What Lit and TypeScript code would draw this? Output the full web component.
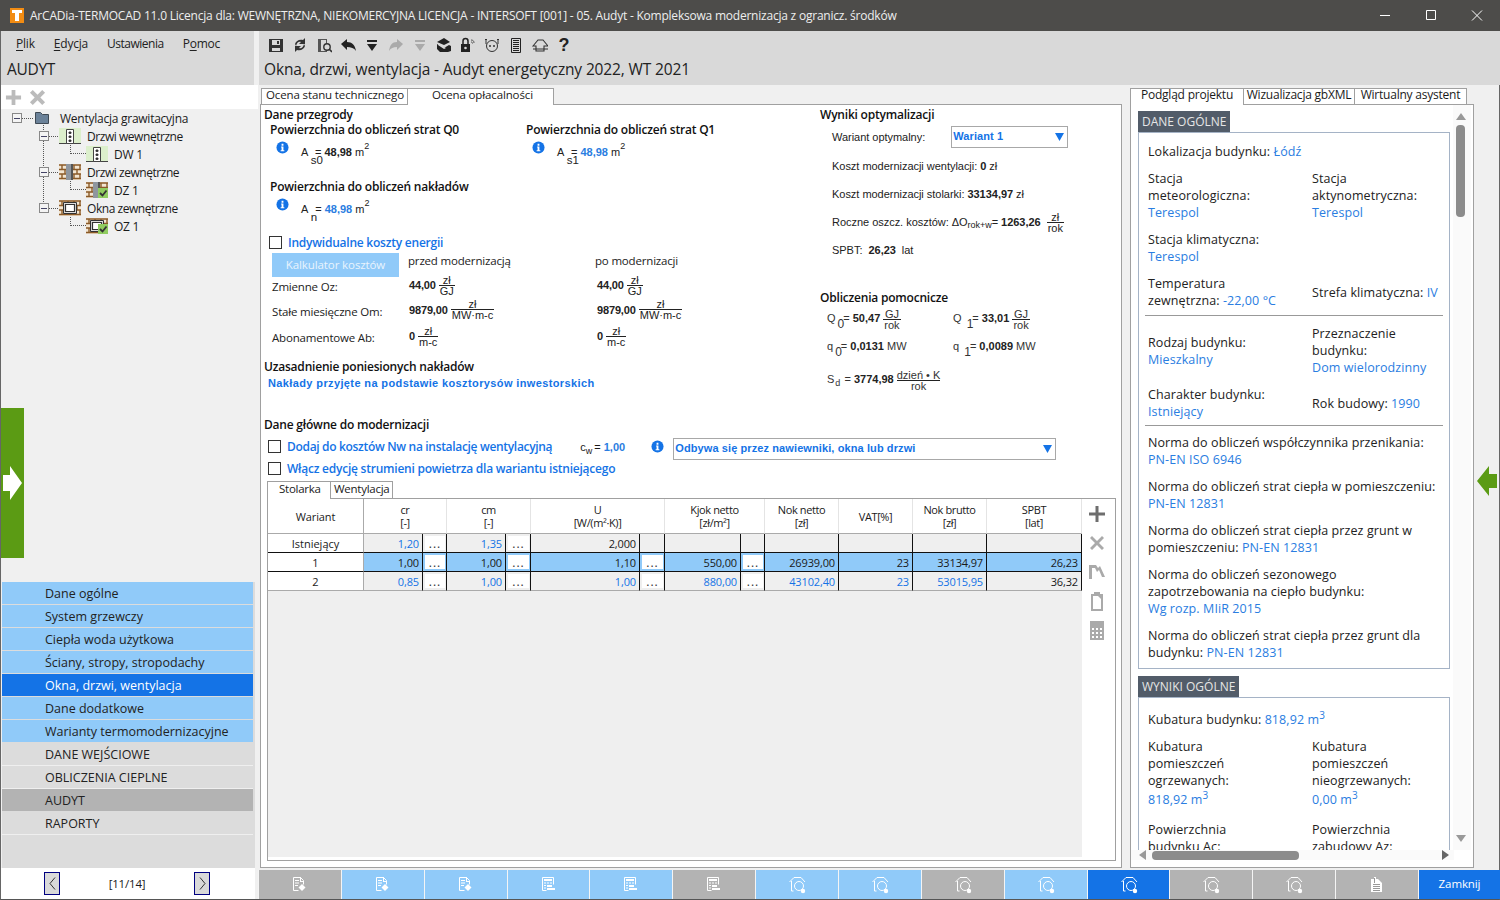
import { LitElement, html, css, svg } from "lit";
import { customElement } from "lit/decorators.js";

const toolIcons = [
  svg`<path fill="#333" d="M1 2h14v13H1z"/><path fill="#d9d9d9" d="M4 3h8v5H4zM4 11h8v3H4z"/><path fill="#333" d="M9 4h2v3H9z"/>`,
  svg`<path fill="#333" d="M3 7c1-3 4-5 8-4l2-2v6H7l2-2C7 4 5 5 4 9zM13 9c-1 3-4 5-8 4l-2 2V9h6l-2 2c2 1 4 0 5-4z"/>`,
  svg`<path fill="#555" d="M2 2h9v13H2z"/><path fill="#d9d9d9" d="M5 3h5v11H5z"/><circle cx="11" cy="10" r="3.2" fill="#d9d9d9" stroke="#333" stroke-width="1.4"/><path stroke="#333" stroke-width="1.6" d="M13 12l3 3"/>`,
  svg`<path fill="#222" d="M1 7l6-5v3c5 0 8 3 9 9-2-3-5-4-9-4v3z"/>`,
  svg`<path fill="#222" d="M3 3h10v2H3zM3 7h10l-5 7z"/>`,
  svg`<path fill="#aaa" d="M15 7L9 2v3c-5 0-7 3-8 9 2-3 4-4 8-4v3z"/>`,
  svg`<path fill="#aaa" d="M3 3h10v2H3zM3 7h10l-5 7z"/>`,
  svg`<path fill="#222" d="M1 5l7-4 6 4-6 3zM1 7l7 4 5-3 2 1v5l-3 1H4l-3-3z"/><path fill="#d9d9d9" d="M2 8l6 4 2-1-8-4z"/>`,
  svg`<path fill="#222" d="M1 7h9v8H1z"/><path fill="none" stroke="#222" stroke-width="1.5" d="M3 7V4a2.500 2.500 0 015 0v3"/><circle cx="5.500" cy="11" r="1.300" fill="#d9d9d9"/><path fill="none" stroke="#555" d="M11 3c2 0 3 1 3 3M11 5c1 0 1.500.5 1.500 1.500"/>`,
  svg`<circle cx="8" cy="9" r="5.500" fill="none" stroke="#333"/><circle cx="6" cy="9" r="1" fill="#333"/><circle cx="10" cy="9" r="1" fill="#333"/><path fill="none" stroke="#333" d="M2 7V2M1 3l1-1 1 1M14 7V2M13 3l1-1 1 1"/>`,
  svg`<path fill="none" stroke="#222" d="M3.500 1.500h9v14h-9z"/><path stroke="#222" d="M5 3.500h6M5 5.500h6M5 7.500h6M5 9.500h6M5 11.500h6M5 13.500h6"/>`,
  svg`<path fill="none" stroke="#333" stroke-width="1.100" d="M1 9l5-6h5l5 6H12v5H4V9z"/><path stroke="#333" d="M1 12h15"/>`,
];

const docIcon = svg`<path fill="none" stroke="#fff" d="M2.500 1.500h7l3 3v4M2.500 1.500v13h5"/><path fill="#fff" d="M9 1h1v4h3v1H9zM4 4h4v1H4zM4 6.500h4v1H4zM4 9h3v1H4z"/><path fill="#fff" d="M11 8l3.500 3.500-3.500 3.500-3.500-3.500z"/>`;
const calcIcon = svg`<path fill="none" stroke="#fff" d="M2.500 1.500h11v7M2.500 1.500v13h4"/><path fill="#fff" d="M4 3h8v2H4zM4 6.500h2v1H4zM7 6.500h2v1H7zM10 6.500h2v1h-2zM4 9h2v1H4zM4 11.500h2v1H4zM7 9h5v2H7zM7 12h8v2H7z"/>`;
const houseIcon = svg`<path fill="none" stroke="#fff" d="M1.500 6L6 1.500h7L17 6M3.500 5v10h2"/><circle cx="11" cy="10" r="4.500" fill="none" stroke="#fff"/><circle cx="15" cy="15" r="2.200" fill="#fff"/>`;
const paperIcon = svg`<path fill="#fff" d="M3 3h3V1h2v2h2l4 4v9H3z"/><path fill="none" stroke="#999" d="M5 8.500h7M5 10.500h7M5 12.500h7M5 14.500h7M6.500 2v5"/>`;

const bricks = svg`<rect width="22" height="16" fill="#f3e6d2"/><path fill="none" stroke="#8a5a28" stroke-width="1.400" d="M0 1h22M0 5.500h22M0 10h22M0 14.500h22M3 1v4.500M9 1v4.500M15 1v4.500M21 1v4.500M6 5.500V10M12 5.500V10M18 5.500V10M3 10v4.500M9 10v4.500M15 10v4.500M21 10v4.500"/>`;
const treeIcons: Record<string, any> = {
  folder: svg`<path fill="#6b8299" stroke="#3f4a55" d="M1.500 12.500V1.500h5l2 2h6v9z"/>`,
  inner: svg`<rect width="22" height="15" fill="#dcefcc"/><path stroke="#444" d="M0 15.500h22"/><path fill="#fff" stroke="#444" d="M7.500 1.500h7v14h-7z"/><path stroke="#444" d="M10 4h2v1.500h-2zM10 8h2v1.500h-2zM10 12h2v1.500h-2z"/>`,
  outer: svg`${bricks}<rect x="7" width="7" height="16" fill="#8f969e"/><path fill="#555" d="M12 0h2v16h-2z"/>`,
  win: svg`${bricks}<rect x="4" y="2" width="14" height="11" fill="#ddd"/><path fill="#fff" stroke="#333" stroke-width="1.200" d="M6.500 4.500h9v7h-9z"/><path fill="none" stroke="#333" d="M4.500 2.500h13v11h-13z"/>`,
};
const check = svg`<rect x="12" y="6" width="10" height="10" fill="#90cc60"/><path fill="none" stroke="#333" stroke-width="1.800" d="M14 11l2.500 2.500 4-5"/>`;

const info = html`<svg class="info" viewBox="0 0 14 14"><circle cx="7" cy="7" r="6.500" fill="#1473e6"/><path fill="#fff" d="M6 3h2v2H6zM5.500 6H8v4h1v1H5v-1h1V7h-.5z"/></svg>`;

const frac = (a: string, b: string) => html`<span class="frac"><span>${a}</span><span class="den">${b}</span></span>`;

@customElement("app-root")
export class AppRoot extends LitElement {
  static styles = css`
    :host { display: block; width: 1500px; height: 900px; overflow: hidden; background: #f0f0f0; font-family: "Open Sans","Noto Sans","Liberation Sans",sans-serif; font-size: 12px; color: #1a1a1a; }
    * { box-sizing: border-box; }
    svg { display: block; flex: none; }
    .win { width: 1500px; height: 900px; display: grid; grid-template-rows: 31px 1fr; border-left: 1px solid #666; border-right: 1px solid #666; border-bottom: 1px solid #555; }
    .title { background: #4d4c4a; margin: 0 -1px; display: flex; align-items: center; color: #eee; padding-left: 10px; font-size: 12px; letter-spacing: -.22px; }
    .logo { width: 14px; height: 15px; margin-right: 6px; }
    .winbtns { margin-left: auto; display: flex; }
    .winbtns svg { width: 46px; height: 31px; }
    .body { display: grid; grid-template-columns: 257px 1fr; min-height: 0; }
    .left { display: flex; flex-direction: column; min-height: 0; }
    .lhead { width: 253px; height: 54px; background: #d9d9d9; }
    .menu { display: flex; height: 24px; align-items: center; padding-left: 15px; font-size: 12px; letter-spacing: -.2px; color: #222; }
    .menu span { margin-right: 19px; }
    .menu span:nth-child(3) { letter-spacing: -.5px; }
    .menu u { text-underline-offset: 2px; }
    .audyt { font-size: 15.5px; padding-left: 6px; line-height: 29px; letter-spacing: -.3px; color: #222; }
    .strip { height: 24px; background: #fff; display: flex; align-items: center; padding-left: 4px; gap: 7px; }
    .strip svg { width: 17px; height: 17px; }
    .treewrap { height: 473px; position: relative; }
    .tree { position: relative; }
    .tree::before { content: ""; position: absolute; left: 42px; top: 16px; height: 83px; border-left: 1px dotted #555; }
    .tr { height: 18px; display: flex; align-items: center; position: relative; }
    .tr .lbl { font-size: 12px; letter-spacing: -.25px; }
    .l1 .lbl { letter-spacing: -.45px; }
    .l0 { padding-left: 11px; } .l1 { padding-left: 38px; } .l2 { padding-left: 69px; }
    .exp { width: 10px; height: 10px; border: 1px solid #888; background: #f4f4f4; display: flex; align-items: center; justify-content: center; flex: none; position: relative; }
    .exp::before { content: ""; width: 6px; border-top: 1px solid #446; }
    .dots { border-top: 1px dotted #555; width: 9px; flex: none; margin-right: 1px; }
    .l0 .dots { width: 11px; }
    .corner { width: 16px; height: 9px; border-left: 1px dotted #555; border-bottom: 1px dotted #555; align-self: flex-start; flex: none; }
    .tr svg { width: 22px; height: 16px; margin-right: 6px; }
    .l0 svg { width: 16px; height: 14px; margin-right: 10px; }
    .green { position: absolute; left: 0; top: 299px; width: 23px; height: 150px; background: #5b9b14; display: flex; align-items: center; justify-content: center; }
    .green svg { width: 20px; height: 34px; }
    .nav { flex: 1; background: #dcdcdc; width: 253px; margin-left: 1px; }
    .nav div { height: 22px; margin: 0 0 1px 0; padding: 1px 0 0 43px; line-height: 22px; background: #90caf9; font-size: 12.500px; letter-spacing: 0; color: #222; width: 251px; }
    .nav .act { background: #1473e6; color: #fff; }
    .nav .g { background: #dcdcdc; box-shadow: 0 1px 0 #efefef; }
    .nav .d { background: #b3b3b3; }
    .pager { height: 31px; background: #fff; width: 254px; display: flex; align-items: center; padding-left: 43px; }
    .pbtn { width: 16px; height: 23px; border: 1px solid #000080; background: #d9d9d9; display: flex; align-items: center; justify-content: center; }
    .pbtn svg { width: 7px; height: 13px; }
    .pg { width: 134px; text-align: center; font-size: 11.500px; letter-spacing: -.2px; }
    .main { display: flex; flex-direction: column; min-height: 0; }
    .mhead { height: 54px; background: #d9d9d9; margin-left: 1px; margin-right: -1px; }
    .tools { height: 28px; display: flex; align-items: center; padding-left: 5px; }
    .tools i { width: 24px; display: flex; justify-content: center; }
    .tools svg { width: 16px; height: 16px; }
    .q { font-family: "Liberation Sans", sans-serif; font-weight: 700; font-size: 18px; width: 24px; text-align: center; color: #222; }
    .mtitle { font-size: 15.500px; letter-spacing: -.14px; padding-left: 5px; line-height: 21px; color: #222; }
    .panes { height: 785px; display: flex; padding: 0 0 2px 2px; }
    .pane1 { width: 862px; display: flex; flex-direction: column; padding-top: 3px; }
    .tabs { display: flex; height: 16px; padding-left: 1px; position: relative; z-index: 1; }
    .tab { border: 1px solid #a0a0a0; border-bottom: 0; font-size: 11.500px; line-height: 12px; padding: 0 0 0 4px; background: #fff; letter-spacing: -.13px; height: 16px; }
    .tab.on { height: 17px; }
    .t1 { width: 147px; } .t2 { width: 147px; padding-left: 24px; margin-left: -1px; }
    .box { flex: 1; border: 1px solid #a0a0a0; background: #fff; padding: 0 6px 0 3px; display: flex; flex-direction: column; }
    .topg { display: grid; grid-template-columns: 556px 1fr; height: 313px; }
    .ttl { font-weight: 600; font-size: 12px; line-height: 14px; height: 14px; letter-spacing: -.21px; color: #111; white-space: nowrap; }
    .ttl.first { margin-top: 3px; }
    .two { display: grid; grid-template-columns: 256px 1fr; padding-left: 6px; margin-top: 1px; }
    .two.sp { margin-top: 14px; }
    .val { display: flex; align-items: flex-start; height: 28px; padding-left: 6px; }
    .info { width: 13px; height: 13px; margin-top: 3px; }
    .qty { margin: 7px 0 0 12px; font: 11px/15px "Liberation Sans", sans-serif; white-space: nowrap; color: #222; }
    .qty b { color: #222; }
    .blue, .qty b.blue { color: #2a7de1; }
    sub, sup { line-height: 0; vertical-align: baseline; position: relative; }
    sub { top: 5px; font-size: 11px; }
    sup { top: -5px; font-size: 9px; }
    .qty sub { top: 8px; font-size: 11.500px; }
    .qty sup { top: -7px; }
    .qty sub.ov2 { margin-right: -8px; }
    .qty sub.ov1 { margin-right: -2px; }
    .ch { display: flex; align-items: center; height: 18px; font-size: 12px; font-weight: 600; color: #1473e6; letter-spacing: -.23px; white-space: nowrap; }
    .cb { width: 13px; height: 13px; border: 1px solid #333; background: #fff; flex: none; margin-right: 6px; }
    .ch.a { margin: 10px 0 2px 5px; }
    .cost { display: grid; grid-template-columns: 136px 187px 1fr; grid-template-rows: 22px 23px 26px 27px; margin-left: 8px; align-items: center; font-size: 11.500px; letter-spacing: -.18px; color: #222; }
    .cost .hd { align-self: start; line-height: 16px; }
    .calc { background: #90caf9; height: 24px; width: 127px; text-align: center; line-height: 24px; align-self: start; color: #e9f4fd; letter-spacing: -.1px; }
    .num { font: 700 11px/14px "Liberation Sans", sans-serif; display: flex; align-items: center; letter-spacing: -.15px; padding-bottom: 3px; margin-left: 1px; color: #222; }
    .num.po { margin-left: 2px; }
    .frac { display: inline-flex; flex-direction: column; align-items: stretch; text-align: center; font: 400 11px/10px "Liberation Sans", sans-serif; margin-left: 3px; vertical-align: middle; letter-spacing: 0; }
    .frac .den { border-top: 1px solid #222; line-height: 10px; padding: 0 1px; }
    .uz { margin-top: 9px; }
    .nak { font: 700 11px/14px "Liberation Sans", sans-serif; color: #1473e6; padding-left: 4px; margin-top: 2px; letter-spacing: .38px; white-space: nowrap; }
    .lab { font: 11px/14px "Liberation Sans", sans-serif; padding-left: 12px; color: #222; display: flex; align-items: center; white-space: nowrap; letter-spacing: -.03px; }
    .lab b { margin: 0 3px; }
    .lab sub { font-size: 9px; top: 3px; }
    .r0 { height: 22px; margin: 4px 0 4px; }
    .r1 { height: 28px; }
    .sel { border: 1px solid #a8a8a8; height: 22px; display: flex; align-items: center; font: 700 11px "Liberation Sans", sans-serif; color: #1473e6; padding: 0 3px 0 1px; justify-content: space-between; }
    .sel span { padding-bottom: 2px; }
    .sel svg { width: 9px; height: 8px; }
    .sel1 { width: 117px; margin-left: 26px; }
    .sel1 span { letter-spacing: .1px; }
    .obl { margin-top: 27px; }
    .qg { display: grid; grid-template-columns: 126px 1fr; padding-left: 7px; margin-top: 3px; }
    .qg > div { font: 11px/14px "Liberation Sans", sans-serif; white-space: nowrap; height: 27px; color: #333; padding-top: 4px; }
    .qg > .fq { padding-top: 1px; }
    .qg b { color: #222; }
    .qg .frac { margin-left: 0; }
    .qg sub { font-size: 12px; top: 6px; margin: 0 -1px 0 2px; }
    .qg .sd { grid-column: span 2; padding-top: 8px; }
    .qg .sd sub { font-size: 9px; top: 3px; margin: 0 1px; }
    .row1 { display: flex; height: 22px; margin: 6px 0 0 4px; align-items: center; }
    .row1 .ch { height: 18px; margin-top: -6px; letter-spacing: -.32px; }
    .cw { font: 11px "Liberation Sans", sans-serif; margin: -4px 0 0 28px; width: 71px; white-space: nowrap; }
    .cw sub { font-size: 9px; top: 3px; margin-right: 2px; }
    .cw .blue { font-weight: 700; }
    .row1 .info { margin: -5px 9px 0 0; }
    .sel2 { width: 383px; letter-spacing: .1px; }
    .row2 { margin: -1px 0 0 4px; }
    .stabs { display: flex; height: 17px; margin: 4px 0 0 3px; position: relative; z-index: 1; font-size: 11.500px; letter-spacing: -.26px; }
    .stabs span { border: 1px solid #a0a0a0; border-bottom: 0; height: 17px; line-height: 14px; background: #fff; }
    .stabs .s1 { width: 64px; padding-left: 11px; height: 18px; }
    .stabs .s2 { width: 63px; padding-left: 3px; margin-left: -1px; }
    .gbox { margin-left: 3px; width: 849px; height: 363px; border: 1px solid #a0a0a0; display: flex; }
    .gridw { width: 814px; height: 358px; background: #efefef; }
    .grid { display: grid; grid-template-columns: 96px 59px 24px 59px 25px 109px 25px 76px 24px 74px 74px 74px 95px; grid-template-rows: 35px 19px 19px 19px; font-size: 11px; letter-spacing: -.38px; }
    .grid > div { display: flex; align-items: center; white-space: nowrap; }
    .h { background: #fff; justify-content: center; text-align: center; border-right: 1px solid #e4e4e4; border-bottom: 1px solid #aaa; line-height: 13px; }
    .h.w { border-right-color: #aaa; letter-spacing: -.1px; }
    .s2c { grid-column: span 2; }
    .rn { background: #fff; justify-content: center; border-right: 1px solid #aaa; letter-spacing: 0; }
    .c { justify-content: flex-end; padding-right: 3px; border-right: 1px solid #111; letter-spacing: -.13px; }
    .c.b { color: #1473e6; }
    .e { padding: 2px 1px 2px 2px; justify-content: center; border-right: 1px solid #111; }
    .e span { background: #fff; width: 100%; height: 100%; display: flex; align-items: flex-end; justify-content: center; line-height: 10px; letter-spacing: 1px; font-size: 12px; padding-bottom: 1px; color: #333; }
    .rb { border-bottom: 1px solid #111; }
    .rl { border-bottom: 1px solid #aaa; }
    .sel-r { background: #90caf9; }
    .side { flex: 1; display: flex; flex-direction: column; align-items: center; padding: 5px 3px 0 0; gap: 9px; }
    .side svg { width: 20px; height: 20px; }
    .pane2 { width: 344px; margin-left: 8px; display: flex; flex-direction: column; padding-top: 3px; }
    .rtabs { height: 16px; display: flex; position: relative; z-index: 1; font-size: 12px; letter-spacing: -.22px; }
    .rtabs span { border: 1px solid #a0a0a0; border-bottom: 0; height: 16px; line-height: 12px; background: #fff; text-align: center; white-space: nowrap; }
    .rtabs .a { width: 114px; height: 17px; }
    .rtabs .b2 { width: 112px; margin-left: -1px; }
    .rtabs .c2 { width: 113px; margin-left: -1px; }
    .rbox { flex: 1; border: 1px solid #a0a0a0; background: #fff; display: grid; grid-template-columns: 322px 18px; grid-template-rows: 745px 10px; min-height: 0; overflow: hidden; }
    .scroll { overflow: hidden; padding: 6px 0 0 7px; }
    .sect { display: inline-block; background: #525c69; color: #e6e6e6; font-size: 12px; line-height: 21px; height: 21px; padding: 0 4px; vertical-align: top; letter-spacing: 0; }
    .sb { width: 312px; border: 1px solid #a5b3c6; margin-bottom: 7px; padding: 10px 6px 7px 9px; font-size: 12.500px; line-height: 17px; color: #222; letter-spacing: .09px; white-space: nowrap; }
    .sb .v { color: #2a7de1; }
    .it { margin-bottom: 10px; }
    .it:last-child { margin-bottom: 0; }
    .pr { display: grid; grid-template-columns: 164px 1fr; align-items: center; margin-bottom: 10px; }
    .pr.big { margin-bottom: 13px; }
    .sb .lst { display: block; margin-top: 2px; }
    .ln { border-top: 1px solid #999; margin: -4px 1px 9px -3px; width: 298px; }
    .ln.b2 { margin-top: -5px; margin-bottom: 8px; }
    .sb2 { padding-top: 13px; height: 240px; }
    .sb sup { top: -5px; font-size: 10px; }
    .vs { display: flex; flex-direction: column; align-items: flex-start; padding-left: 3px; background: #fafafa; }
    .vs svg { width: 10px; height: 7px; margin: 8px 0 0 0; }
    .vth { width: 9px; height: 92px; background: #8c8c8c; border-radius: 4px; margin-top: 5px; }
    .vs .dn { margin-top: auto; margin-bottom: 8px; }
    .hs { grid-column: span 2; display: flex; align-items: center; padding-left: 8px; background: #fafafa; margin-right: 17px; }
    .hs svg { width: 7px; height: 10px; flex: none; }
    .hth { width: 147px; height: 9px; background: #8c8c8c; border-radius: 4px; margin-left: 6px; }
    .hs .rt { margin-left: auto; margin-right: 5px; }
    .arrow { flex: 1; display: flex; align-items: center; justify-content: center; padding: 0 0 0 1px; }
    .arrow svg { width: 20px; height: 30px; margin-top: 9px; }
    .bar { height: 29px; display: flex; padding-left: 1px; margin-right: -1px; background: #f4f4f4; gap: 1px; }
    .bb { flex: 1; background: #b3b3b3; display: flex; align-items: center; justify-content: center; }
    .bb.l { background: #90caf9; }
    .bb.a { background: #1473e6; }
    .bb svg { width: 18px; height: 18px; }
    .cl { flex: none; width: 81px; background: #1473e6; color: #fff; text-align: center; line-height: 27px; font-size: 11.500px; letter-spacing: -.1px; }
  `;

  tree() {
    const n = (cls: string, pre: any, ic: string, lbl: string, chk = false) => html`<div class="tr ${cls}">${pre}<svg viewBox="${ic === "folder" ? "0 0 16 14" : "0 0 22 16"}">${treeIcons[ic]}${chk ? check : ""}</svg><span class="lbl">${lbl}</span></div>`;
    const ex = html`<span class="exp"></span><span class="dots"></span>`;
    const co = html`<span class="corner"></span>`;
    return html`<div class="tree">
      ${n("l0", ex, "folder", "Wentylacja grawitacyjna")}
      ${n("l1", ex, "inner", "Drzwi wewnętrzne")}
      ${n("l2", co, "inner", "DW 1")}
      ${n("l1", ex, "outer", "Drzwi zewnętrzne")}
      ${n("l2", co, "outer", "DZ 1", true)}
      ${n("l1", ex, "win", "Okna zewnętrzne")}
      ${n("l2", co, "win", "OZ 1", true)}
    </div>`;
  }

  grid() {
    const hdr = [["Wariant", "", "w"], ["cr", "[-]", "s"], ["cm", "[-]", "s"], ["U", "[W/(m²·K)]", "s"], ["Kjok netto", "[zł/m²]", "s"], ["Nok netto", "[zł]", ""], ["VAT[%]", "", ""], ["Nok brutto", "[zł]", ""], ["SPBT", "[lat]", ""]];
    const rows = [
      { n: "Istniejący", cr: "1,20", cm: "1,35", u: "2,000", k: "", nn: "", v: "", nb: "", sp: "", cls: "rb", blue: true, ub: false, sel: false },
      { n: "1", cr: "1,00", cm: "1,00", u: "1,10", k: "550,00", nn: "26939,00", v: "23", nb: "33134,97", sp: "26,23", cls: "rb", blue: false, ub: false, sel: true },
      { n: "2", cr: "0,85", cm: "1,00", u: "1,00", k: "880,00", nn: "43102,40", v: "23", nb: "53015,95", sp: "36,32", cls: "rl", blue: true, ub: true, sel: false },
    ];
    return html`<div class="grid">
      ${hdr.map((h) => html`<div class="h ${h[2] === "w" ? "w" : ""} ${h[2] === "s" ? "s2c" : ""}"><span>${h[0]}${h[1] ? html`<br />${h[1]}` : ""}</span></div>`)}
      ${rows.map((r) => {
        const bg = `${r.cls} ${r.sel ? "sel-r" : ""}`;
        const c = (t: string, blue = r.blue) => html`<div class="c ${blue ? "b" : ""} ${bg}">${t}</div>`;
        const e = (show = true) => html`<div class="e ${bg}">${show ? html`<span>...</span>` : ""}</div>`;
        return html`<div class="rn ${r.cls}">${r.n}</div>
          ${c(r.cr)}${e()}${c(r.cm)}${e()}${c(r.u, r.ub)}${e(r.n !== "Istniejący")}${c(r.k)}${e(r.n !== "Istniejący")}${c(r.nn)}${c(r.v)}${c(r.nb)}${c(r.sp, false)}`;
      })}
    </div>`;
  }

  render() {
    const nav = [["Dane ogólne", ""], ["System grzewczy", ""], ["Ciepła woda użytkowa", ""], ["Ściany, stropy, stropodachy", ""], ["Okna, drzwi, wentylacja", "act"], ["Dane dodatkowe", ""], ["Warianty termomodernizacyjne", ""], ["DANE WEJŚCIOWE", "g"], ["OBLICZENIA CIEPLNE", "g"], ["AUDYT", "d"], ["RAPORTY", "g"]];
    const bar: [any, string][] = [[docIcon, ""], [docIcon, "l"], [docIcon, "l"], [calcIcon, "l"], [calcIcon, "l"], [calcIcon, ""], [houseIcon, "l"], [houseIcon, "l"], [houseIcon, ""], [houseIcon, "l"], [houseIcon, "a"], [houseIcon, ""], [houseIcon, ""], [paperIcon, ""]];
    return html`<div class="win">
      <div class="title">
        <svg class="logo" viewBox="0 0 14 15"><rect width="14" height="15" fill="#f28c13"/><path fill="#fff" d="M2 2h10v3H9v8H5V5H2z"/></svg>
        <span>ArCADia-TERMOCAD 11.0 Licencja dla: WEWNĘTRZNA, NIEKOMERCYJNA LICENCJA - INTERSOFT [001] - 05. Audyt - Kompleksowa modernizacja z ogranicz. środków</span>
        <div class="winbtns">
          <svg viewBox="0 0 46 31"><path stroke="#fff" d="M18 15.500h10"/></svg>
          <svg viewBox="0 0 46 31"><path fill="none" stroke="#fff" d="M18.500 10.500h9v9h-9z"/></svg>
          <svg viewBox="0 0 46 31"><path stroke="#fff" d="M18 10.500l10 10M28 10.500l-10 10"/></svg>
        </div>
      </div>
      <div class="body">
        <div class="left">
          <div class="lhead">
            <div class="menu"><span><u>P</u>lik</span><span><u>E</u>dycja</span><span>Ustawienia</span><span>P<u>o</u>moc</span></div>
            <div class="audyt">AUDYT</div>
          </div>
          <div class="strip">
            <svg viewBox="0 0 18 18"><path fill="#bbb" d="M7 1h4v6h6v4h-6v6H7v-6H1V7h6z"/></svg>
            <svg viewBox="0 0 18 18"><path fill="#bbb" d="M4 1l5 5 5-5 3 3-5 5 5 5-3 3-5-5-5 5-3-3 5-5-5-5z"/></svg>
          </div>
          <div class="treewrap">
            ${this.tree()}
            <div class="green"><svg viewBox="0 0 20 34"><path fill="#fff" d="M0 9h7V0l12 17L7 34v-9H0z"/></svg></div>
          </div>
          <div class="nav">${nav.map((n) => html`<div class="${n[1]}">${n[0]}</div>`)}</div>
          <div class="pager">
            <div class="pbtn"><svg viewBox="0 0 7 13"><path fill="none" stroke="#333" d="M6 .5L1 6.500l5 6"/></svg></div>
            <div class="pg">[11/14]</div>
            <div class="pbtn"><svg viewBox="0 0 7 13"><path fill="none" stroke="#333" d="M1 .5l5 6-5 6"/></svg></div>
          </div>
        </div>
        <div class="main">
          <div class="mhead">
            <div class="tools">${toolIcons.map((i) => html`<i><svg viewBox="0 0 16 16">${i}</svg></i>`)}<span class="q">?</span></div>
            <div class="mtitle">Okna, drzwi, wentylacja - Audyt energetyczny 2022, WT 2021</div>
          </div>
          <div class="panes">
            <div class="pane1">
              <div class="tabs"><div class="tab t1">Ocena stanu technicznego</div><div class="tab on t2">Ocena opłacalności</div></div>
              <div class="box">
                <div class="topg">
                  <div>
                    <div class="ttl first">Dane przegrody</div>
                    <div class="two">
                      <div class="ttl">Powierzchnia do obliczeń strat Q0</div>
                      <div class="ttl">Powierzchnia do obliczeń strat Q1</div>
                    </div>
                    <div class="two">
                      <div class="val">${info}<span class="qty">A <sub class="ov2">s0</sub>= <b>48,98</b> m<sup>2</sup></span></div>
                      <div class="val">${info}<span class="qty">A <sub class="ov2">s1</sub>= <b class="blue">48,98</b> m<sup>2</sup></span></div>
                    </div>
                    <div class="two sp"><div class="ttl">Powierzchnia do obliczeń nakładów</div></div>
                    <div class="two"><div class="val">${info}<span class="qty">A <sub class="ov1">n</sub>= <b class="blue">48,98</b> m<sup>2</sup></span></div></div>
                    <div class="ch a"><span class="cb"></span>Indywidualne koszty energii</div>
                    <div class="cost">
                      <div class="calc">Kalkulator kosztów</div><div class="hd">przed modernizacją</div><div class="hd">po modernizacji</div>
                      <div>Zmienne Oz:</div><div class="num">44,00 ${frac("zł", "GJ")}</div><div class="num po">44,00 ${frac("zł", "GJ")}</div>
                      <div>Stałe miesięczne Om:</div><div class="num">9879,00 ${frac("zł", "MW·m-c")}</div><div class="num po">9879,00 ${frac("zł", "MW·m-c")}</div>
                      <div>Abonamentowe Ab:</div><div class="num">0 ${frac("zł", "m-c")}</div><div class="num po">0 ${frac("zł", "m-c")}</div>
                    </div>
                    <div class="ttl uz">Uzasadnienie poniesionych nakładów</div>
                    <div class="nak">Nakłady przyjęte na podstawie kosztorysów inwestorskich</div>
                  </div>
                  <div>
                    <div class="ttl first">Wyniki optymalizacji</div>
                    <div class="lab r0">Wariant optymalny:<div class="sel sel1"><span>Wariant 1</span><svg viewBox="0 0 9 8"><path fill="#1473e6" d="M0 0h9L4.500 8z"/></svg></div></div>
                    <div class="lab r1">Koszt modernizacji wentylacji:<b>0</b>zł</div>
                    <div class="lab r1">Koszt modernizacji stolarki:<b>33134,97</b>zł</div>
                    <div class="lab r1">Roczne oszcz. kosztów: ΔO<sub>rok+w</sub>=<b>1263,26</b>${frac("zł", "rok")}</div>
                    <div class="lab r1">SPBT:&nbsp;<b>26,23</b>&nbsp;lat</div>
                    <div class="ttl obl">Obliczenia pomocnicze</div>
                    <div class="qg">
                      <div class="fq">Q<sub>0</sub>= <b>50,47</b> ${frac("GJ", "rok")}</div><div class="fq">Q <sub>1</sub>= <b>33,01</b> ${frac("GJ", "rok")}</div>
                      <div>q<sub>0</sub>= <b>0,0131</b> MW</div><div>q <sub>1</sub>= <b>0,0089</b> MW</div>
                      <div class="sd">S<sub>d</sub> = <b>3774,98</b> ${frac("dzień • K", "rok")}</div>
                    </div>
                  </div>
                </div>
                <div class="ttl">Dane główne do modernizacji</div>
                <div class="row1">
                  <div class="ch"><span class="cb"></span>Dodaj do kosztów Nw na instalację wentylacyjną</div>
                  <span class="cw">c<sub>w</sub>= <span class="blue">1,00</span></span>
                  ${info}
                  <div class="sel sel2"><span>Odbywa się przez nawiewniki, okna lub drzwi</span><svg viewBox="0 0 9 8"><path fill="#1473e6" d="M0 0h9L4.500 8z"/></svg></div>
                </div>
                <div class="ch row2"><span class="cb"></span>Włącz edycję strumieni powietrza dla wariantu istniejącego</div>
                <div class="stabs"><span class="s1">Stolarka</span><span class="s2">Wentylacja</span></div>
                <div class="gbox">
                  <div class="gridw">${this.grid()}</div>
                  <div class="side">
                    <svg viewBox="0 0 20 20"><path fill="#6e6e6e" d="M8.500 2h3v6.500H18v3h-6.500V18h-3v-6.500H2v-3h6.500z"/></svg>
                    <svg viewBox="0 0 20 20"><path fill="#aaa" d="M5 3l5 5 5-5 2 2-5 5 5 5-2 2-5-5-5 5-2-2 5-5-5-5z"/></svg>
                    <svg viewBox="0 0 20 20"><path fill="#aaa" d="M2 3h7l2 3 2-2 5 11h-3l-3-7-2 2-2-4H5v11H2z"/></svg>
                    <svg viewBox="0 0 20 20"><path fill="#aaa" d="M4 3h3V1h6v2h3v17H4z"/><path fill="#fff" d="M6 5h5l3 3v10H6z"/></svg>
                    <svg viewBox="0 0 20 20"><path fill="#aaa" d="M3 1h14v19H3z"/><path fill="#fff" d="M5 8h2v2H5zM9 8h2v2H9zM13 8h2v2h-2zM5 12h2v2H5zM9 12h2v2H9zM13 12h2v2h-2zM5 16h2v2H5zM9 16h2v2H9zM13 16h2v2h-2z"/></svg>
                  </div>
                </div>
              </div>
            </div>
            <div class="pane2">
              <div class="rtabs"><span class="a">Podgląd projektu</span><span class="b2">Wizualizacja gbXML</span><span class="c2">Wirtualny asystent</span></div>
              <div class="rbox">
                <div class="scroll">
                  <span class="sect">DANE OGÓLNE</span>
                  <div class="sb">
                    <div class="it">Lokalizacja budynku: <span class="v">Łódź</span></div>
                    <div class="pr"><div>Stacja<br />meteorologiczna:<br /><span class="v">Terespol</span></div><div>Stacja<br />aktynometryczna:<br /><span class="v">Terespol</span></div></div>
                    <div class="it">Stacja klimatyczna:<br /><span class="v">Terespol</span></div>
                    <div class="pr"><div>Temperatura<br />zewnętrzna: <span class="v">-22,00 °C</span></div><div>Strefa klimatyczna: <span class="v">IV</span></div></div>
                    <div class="ln"></div>
                    <div class="pr"><div>Rodzaj budynku:<br /><span class="v">Mieszkalny</span></div><div>Przeznaczenie<br />budynku:<br /><span class="v">Dom wielorodzinny</span></div></div>
                    <div class="pr"><div>Charakter budynku:<br /><span class="v">Istniejący</span></div><div>Rok budowy: <span class="v">1990</span></div></div>
                    <div class="ln b2"></div>
                    <div class="it">Norma do obliczeń współczynnika przenikania:<br /><span class="v">PN-EN ISO 6946</span></div>
                    <div class="it">Norma do obliczeń strat ciepła w pomieszczeniu:<br /><span class="v">PN-EN 12831</span></div>
                    <div class="it">Norma do obliczeń strat ciepła przez grunt w<br />pomieszczeniu: <span class="v">PN-EN 12831</span></div>
                    <div class="it">Norma do obliczeń sezonowego<br />zapotrzebowania na ciepło budynku:<br /><span class="v">Wg rozp. MIiR 2015</span></div>
                    <div class="it">Norma do obliczeń strat ciepła przez grunt dla<br />budynku: <span class="v">PN-EN 12831</span></div>
                  </div>
                  <span class="sect">WYNIKI OGÓLNE</span>
                  <div class="sb sb2">
                    <div class="it">Kubatura budynku: <span class="v">818,92 m<sup>3</sup></span></div>
                    <div class="pr big"><div>Kubatura<br />pomieszczeń<br />ogrzewanych:<span class="v lst">818,92 m<sup>3</sup></span></div><div>Kubatura<br />pomieszczeń<br />nieogrzewanych:<span class="v lst">0,00 m<sup>3</sup></span></div></div>
                    <div class="pr"><div>Powierzchnia<br />budynku Ac:</div><div>Powierzchnia<br />zabudowy Az:</div></div>
                  </div>
                </div>
                <div class="vs">
                  <svg viewBox="0 0 10 7"><path fill="#999" d="M5 0l5 7H0z"/></svg>
                  <div class="vth"></div>
                  <svg class="dn" viewBox="0 0 10 7"><path fill="#999" d="M0 0h10L5 7z"/></svg>
                </div>
                <div class="hs">
                  <svg viewBox="0 0 7 10"><path fill="#999" d="M7 0v10L0 5z"/></svg>
                  <div class="hth"></div>
                  <svg class="rt" viewBox="0 0 7 10"><path fill="#666" d="M0 0v10l7-5z"/></svg>
                </div>
              </div>
            </div>
            <div class="arrow"><svg viewBox="0 0 20 30"><path fill="#5b9b14" d="M0 15L12 0v8h8v14h-8v8z"/></svg></div>
          </div>
          <div class="bar">
            ${bar.map((b) => html`<div class="bb ${b[1]}"><svg viewBox="0 0 18 18">${b[0]}</svg></div>`)}
            <div class="cl">Zamknij</div>
          </div>
        </div>
      </div>
    </div>`;
  }
}
